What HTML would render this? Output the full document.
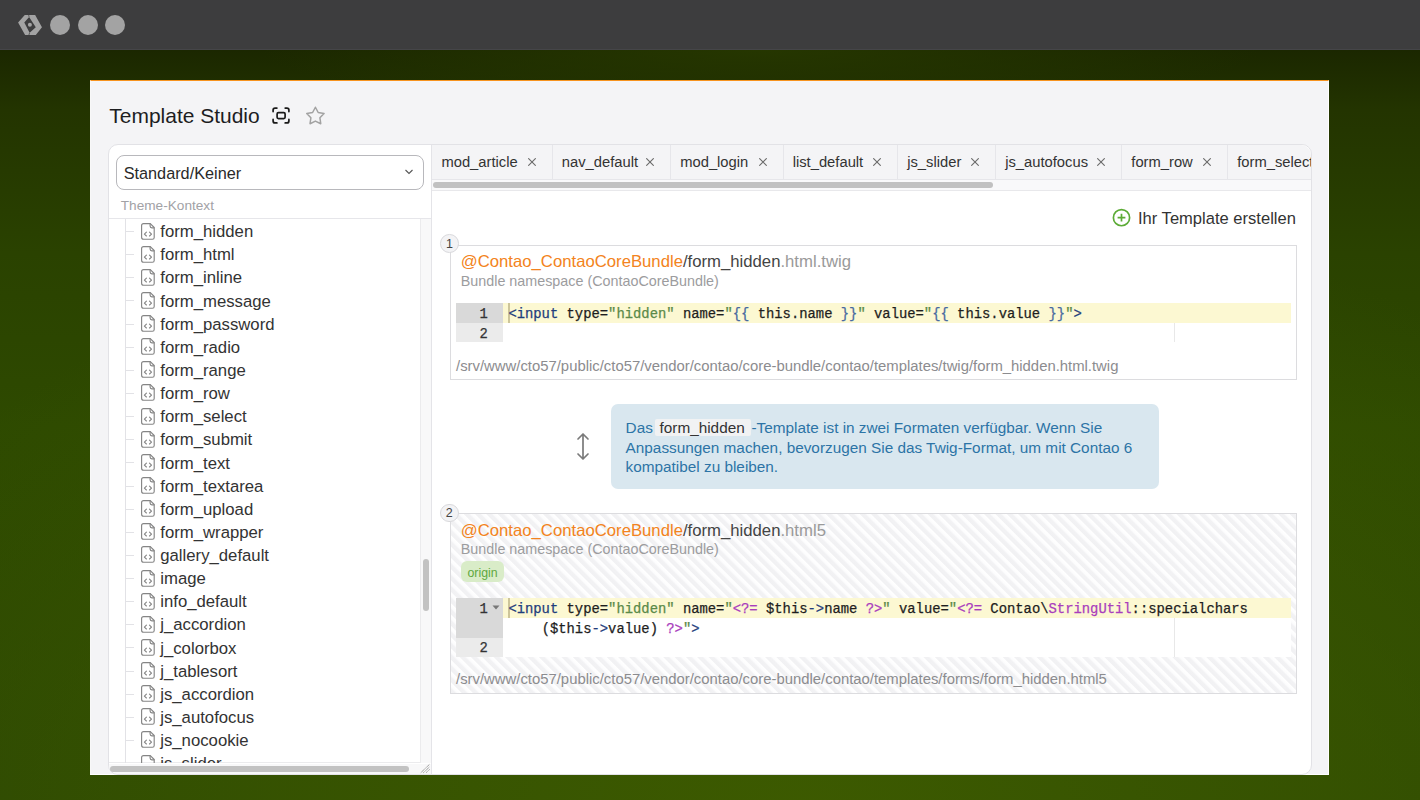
<!DOCTYPE html>
<html><head><meta charset="utf-8">
<style>
*{box-sizing:border-box;margin:0;padding:0}
html,body{width:1420px;height:800px;overflow:hidden;background:#3d3d3d}
body{position:relative;font-family:"Liberation Sans",sans-serif;color:#222}
.abs{position:absolute}
.topbar{left:0;top:0;width:1420px;height:50px;background:#3d3d3e;border-bottom:1px solid #454548}
.dot{width:20px;height:20px;border-radius:50%;background:#a3a3a3;top:15px}
.bg{left:0;top:50px;width:1420px;height:750px;
 background:radial-gradient(ellipse 1050px 620px at 800px 760px, rgba(62,92,0,0.9) 0%, rgba(62,92,0,0.5) 50%, rgba(62,92,0,0) 100%),
 radial-gradient(ellipse 500px 60px at 760px 0px, rgba(40,58,0,0.8) 0%, rgba(40,58,0,0) 100%),
 linear-gradient(180deg,#1b2700 0%,#233400 8%,#2a4200 27%,#2e4a00 50%,#2d4802 100%)}
.panel{left:90px;top:80px;width:1239px;height:695px;background:#f4f4f6;overflow:hidden;border-top:1px solid #f7931e;border-right:1px solid #fff;border-bottom:1px solid #fff;border-left:1px solid #f8f8f8}
.t{position:absolute;white-space:nowrap;line-height:1}
.mono{font-family:"Liberation Mono",monospace;-webkit-text-stroke:0.25px currentColor}
</style></head>
<body>
<div class="abs topbar"></div>
<svg class="abs" style="left:15px;top:12px" width="30" height="26" viewBox="0 0 30 26">
 <path d="M9.75 3.1 L20.15 3.1 L26.97 15.3 L20.8 22.9 L10.1 22.9 L3.1 10.6 Z M14.1 4.9 L9.3 10.4 L14.6 20.8 L20.8 15.3 Z" fill="#a3a3a3" fill-rule="evenodd"/>
 <circle cx="14.9" cy="12.8" r="2" fill="#a3a3a3"/>
 <path d="M13.65 3 L14.1 4.9 M14.6 20.8 L13.9 23" stroke="#3d3d3e" stroke-width="0.7"/>
</svg>
<div class="abs dot" style="left:50px"></div>
<div class="abs dot" style="left:77.5px"></div>
<div class="abs dot" style="left:105px"></div>
<div class="abs bg"></div>
<div class="abs panel"></div>
<div class="t" style="left:109.30px;top:106.35px;font-size:20.97px;color:#1d1d1f;">Template Studio</div>
<svg class="abs" style="left:272px;top:107px" width="18" height="17" viewBox="0 0 18 17" fill="none" stroke="#1a1a1a" stroke-width="1.7" stroke-linecap="round">
<path d="M1.1 4.6V3.1Q1.1 1.1 3.1 1.1H4.9M13.2 1.1H14.9Q16.9 1.1 16.9 3.1V4.6M16.9 12.4V13.9Q16.9 15.9 14.9 15.9H13.2M4.9 15.9H3.1Q1.1 15.9 1.1 13.9V12.4"/>
<rect x="5.1" y="5.6" width="8" height="6" rx="1.3"/></svg>
<svg class="abs" style="left:304px;top:105px" width="23" height="21" viewBox="0 0 23 21" fill="none" stroke="#a2a2a2" stroke-width="1.5" stroke-linejoin="round">
<path d="M11.40 2.25 L14.19 7.51 L20.05 8.54 L15.92 12.82 L16.75 18.71 L11.40 16.10 L6.05 18.71 L6.88 12.82 L2.75 8.54 L8.61 7.51 Z"/></svg>
<div class="abs" style="left:107.50px;top:143.50px;width:1204.00px;height:631.00px;background:#fff;border:1px solid #e2e2e6;border-radius:10px"></div>
<div class="abs" style="left:431.00px;top:144.50px;width:1.00px;height:629.00px;background:#e4e4e8"></div>
<div class="abs" style="left:116.00px;top:155.30px;width:307.80px;height:34.40px;background:#fff;border:1px solid #b8b8bc;border-radius:8px"></div>
<div class="t" style="left:123.70px;top:164.74px;font-size:16.26px;color:#2a2a2a;">Standard/Keiner</div>
<svg class="abs" style="left:402px;top:167px" width="14" height="10" viewBox="0 0 14 10" fill="none" stroke="#555" stroke-width="1.1"><path d="M3.5 3 L7 6.5 L10.5 3"/></svg>
<div class="t" style="left:120.80px;top:199.26px;font-size:13.63px;color:#a2a2a6;">Theme-Kontext</div>
<div class="abs" style="left:108.50px;top:218.00px;width:322.50px;height:1.00px;background:#e6e6ea"></div>
<div class="abs" style="left:420.00px;top:219.00px;width:11.00px;height:543.50px;background:#f8f8f9;border-left:1px solid #ebebed"></div>
<div class="abs" style="left:423.00px;top:558.60px;width:6.00px;height:52.40px;background:#c2c2c2;border-radius:3px"></div>
<div class="abs" style="left:108.50px;top:762.30px;width:312.00px;height:1.00px;background:#ebebed"></div>
<div class="abs" style="left:108.50px;top:763.50px;width:322.50px;height:10.50px;background:#f8f8f9;border-radius:0 0 0 10px"></div>
<div class="abs" style="left:110.00px;top:766.00px;width:298.50px;height:5.60px;background:#c2c2c2;border-radius:3px"></div>
<svg class="abs" style="left:420px;top:762px" width="11" height="12" viewBox="0 0 11 12" stroke="#7a7a7a" stroke-width="0.9" stroke-dasharray="1.1 0.6"><path d="M0.8 10.7 L9.7 2.2 M3.4 10.7 L9.7 4.8 M6.3 10.5 L9.7 7.4"/></svg>
<div class="abs" style="left:125.00px;top:219.00px;width:1.00px;height:543.50px;background:#e2e2e6"></div>
<div class="abs" style="left:108px;top:219px;width:312px;height:543.5px;overflow:hidden">
<div class="abs" style="left:17.5px;top:12.00px;width:8.5px;height:1px;background:#e2e2e6"></div>
<svg class="abs" style="left:32.95px;top:3.50px" width="15" height="18" viewBox="0 0 15 18" fill="none" stroke="#858585" stroke-width="1.15" stroke-linejoin="round" stroke-linecap="round"><path d="M0.6 2.6Q0.6 0.6 2.6 0.6H9.3L13.2 4.5V14.4Q13.2 16.2 11.4 16.2H2.6Q0.6 16.2 0.6 14.2Z"/><path d="M9.1 0.8V3.1Q9.1 4.8 10.8 4.8H13"/><path d="M5.4 9.2L3.4 11.1L5.4 13M8.5 9.2L10.5 11.1L8.5 13"/></svg>
<div class="t" style="left:52.25px;top:5.14px;font-size:16.73px;color:#333">form_hidden</div>
<div class="abs" style="left:17.5px;top:35.14px;width:8.5px;height:1px;background:#e2e2e6"></div>
<svg class="abs" style="left:32.95px;top:26.64px" width="15" height="18" viewBox="0 0 15 18" fill="none" stroke="#858585" stroke-width="1.15" stroke-linejoin="round" stroke-linecap="round"><path d="M0.6 2.6Q0.6 0.6 2.6 0.6H9.3L13.2 4.5V14.4Q13.2 16.2 11.4 16.2H2.6Q0.6 16.2 0.6 14.2Z"/><path d="M9.1 0.8V3.1Q9.1 4.8 10.8 4.8H13"/><path d="M5.4 9.2L3.4 11.1L5.4 13M8.5 9.2L10.5 11.1L8.5 13"/></svg>
<div class="t" style="left:52.25px;top:28.27px;font-size:16.73px;color:#333">form_html</div>
<div class="abs" style="left:17.5px;top:58.27px;width:8.5px;height:1px;background:#e2e2e6"></div>
<svg class="abs" style="left:32.95px;top:49.77px" width="15" height="18" viewBox="0 0 15 18" fill="none" stroke="#858585" stroke-width="1.15" stroke-linejoin="round" stroke-linecap="round"><path d="M0.6 2.6Q0.6 0.6 2.6 0.6H9.3L13.2 4.5V14.4Q13.2 16.2 11.4 16.2H2.6Q0.6 16.2 0.6 14.2Z"/><path d="M9.1 0.8V3.1Q9.1 4.8 10.8 4.8H13"/><path d="M5.4 9.2L3.4 11.1L5.4 13M8.5 9.2L10.5 11.1L8.5 13"/></svg>
<div class="t" style="left:52.25px;top:51.41px;font-size:16.73px;color:#333">form_inline</div>
<div class="abs" style="left:17.5px;top:81.41px;width:8.5px;height:1px;background:#e2e2e6"></div>
<svg class="abs" style="left:32.95px;top:72.91px" width="15" height="18" viewBox="0 0 15 18" fill="none" stroke="#858585" stroke-width="1.15" stroke-linejoin="round" stroke-linecap="round"><path d="M0.6 2.6Q0.6 0.6 2.6 0.6H9.3L13.2 4.5V14.4Q13.2 16.2 11.4 16.2H2.6Q0.6 16.2 0.6 14.2Z"/><path d="M9.1 0.8V3.1Q9.1 4.8 10.8 4.8H13"/><path d="M5.4 9.2L3.4 11.1L5.4 13M8.5 9.2L10.5 11.1L8.5 13"/></svg>
<div class="t" style="left:52.25px;top:74.55px;font-size:16.73px;color:#333">form_message</div>
<div class="abs" style="left:17.5px;top:104.54px;width:8.5px;height:1px;background:#e2e2e6"></div>
<svg class="abs" style="left:32.95px;top:96.04px" width="15" height="18" viewBox="0 0 15 18" fill="none" stroke="#858585" stroke-width="1.15" stroke-linejoin="round" stroke-linecap="round"><path d="M0.6 2.6Q0.6 0.6 2.6 0.6H9.3L13.2 4.5V14.4Q13.2 16.2 11.4 16.2H2.6Q0.6 16.2 0.6 14.2Z"/><path d="M9.1 0.8V3.1Q9.1 4.8 10.8 4.8H13"/><path d="M5.4 9.2L3.4 11.1L5.4 13M8.5 9.2L10.5 11.1L8.5 13"/></svg>
<div class="t" style="left:52.25px;top:97.68px;font-size:16.73px;color:#333">form_password</div>
<div class="abs" style="left:17.5px;top:127.68px;width:8.5px;height:1px;background:#e2e2e6"></div>
<svg class="abs" style="left:32.95px;top:119.18px" width="15" height="18" viewBox="0 0 15 18" fill="none" stroke="#858585" stroke-width="1.15" stroke-linejoin="round" stroke-linecap="round"><path d="M0.6 2.6Q0.6 0.6 2.6 0.6H9.3L13.2 4.5V14.4Q13.2 16.2 11.4 16.2H2.6Q0.6 16.2 0.6 14.2Z"/><path d="M9.1 0.8V3.1Q9.1 4.8 10.8 4.8H13"/><path d="M5.4 9.2L3.4 11.1L5.4 13M8.5 9.2L10.5 11.1L8.5 13"/></svg>
<div class="t" style="left:52.25px;top:120.82px;font-size:16.73px;color:#333">form_radio</div>
<div class="abs" style="left:17.5px;top:150.82px;width:8.5px;height:1px;background:#e2e2e6"></div>
<svg class="abs" style="left:32.95px;top:142.32px" width="15" height="18" viewBox="0 0 15 18" fill="none" stroke="#858585" stroke-width="1.15" stroke-linejoin="round" stroke-linecap="round"><path d="M0.6 2.6Q0.6 0.6 2.6 0.6H9.3L13.2 4.5V14.4Q13.2 16.2 11.4 16.2H2.6Q0.6 16.2 0.6 14.2Z"/><path d="M9.1 0.8V3.1Q9.1 4.8 10.8 4.8H13"/><path d="M5.4 9.2L3.4 11.1L5.4 13M8.5 9.2L10.5 11.1L8.5 13"/></svg>
<div class="t" style="left:52.25px;top:143.95px;font-size:16.73px;color:#333">form_range</div>
<div class="abs" style="left:17.5px;top:173.95px;width:8.5px;height:1px;background:#e2e2e6"></div>
<svg class="abs" style="left:32.95px;top:165.45px" width="15" height="18" viewBox="0 0 15 18" fill="none" stroke="#858585" stroke-width="1.15" stroke-linejoin="round" stroke-linecap="round"><path d="M0.6 2.6Q0.6 0.6 2.6 0.6H9.3L13.2 4.5V14.4Q13.2 16.2 11.4 16.2H2.6Q0.6 16.2 0.6 14.2Z"/><path d="M9.1 0.8V3.1Q9.1 4.8 10.8 4.8H13"/><path d="M5.4 9.2L3.4 11.1L5.4 13M8.5 9.2L10.5 11.1L8.5 13"/></svg>
<div class="t" style="left:52.25px;top:167.09px;font-size:16.73px;color:#333">form_row</div>
<div class="abs" style="left:17.5px;top:197.09px;width:8.5px;height:1px;background:#e2e2e6"></div>
<svg class="abs" style="left:32.95px;top:188.59px" width="15" height="18" viewBox="0 0 15 18" fill="none" stroke="#858585" stroke-width="1.15" stroke-linejoin="round" stroke-linecap="round"><path d="M0.6 2.6Q0.6 0.6 2.6 0.6H9.3L13.2 4.5V14.4Q13.2 16.2 11.4 16.2H2.6Q0.6 16.2 0.6 14.2Z"/><path d="M9.1 0.8V3.1Q9.1 4.8 10.8 4.8H13"/><path d="M5.4 9.2L3.4 11.1L5.4 13M8.5 9.2L10.5 11.1L8.5 13"/></svg>
<div class="t" style="left:52.25px;top:190.23px;font-size:16.73px;color:#333">form_select</div>
<div class="abs" style="left:17.5px;top:220.22px;width:8.5px;height:1px;background:#e2e2e6"></div>
<svg class="abs" style="left:32.95px;top:211.72px" width="15" height="18" viewBox="0 0 15 18" fill="none" stroke="#858585" stroke-width="1.15" stroke-linejoin="round" stroke-linecap="round"><path d="M0.6 2.6Q0.6 0.6 2.6 0.6H9.3L13.2 4.5V14.4Q13.2 16.2 11.4 16.2H2.6Q0.6 16.2 0.6 14.2Z"/><path d="M9.1 0.8V3.1Q9.1 4.8 10.8 4.8H13"/><path d="M5.4 9.2L3.4 11.1L5.4 13M8.5 9.2L10.5 11.1L8.5 13"/></svg>
<div class="t" style="left:52.25px;top:213.36px;font-size:16.73px;color:#333">form_submit</div>
<div class="abs" style="left:17.5px;top:243.36px;width:8.5px;height:1px;background:#e2e2e6"></div>
<svg class="abs" style="left:32.95px;top:234.86px" width="15" height="18" viewBox="0 0 15 18" fill="none" stroke="#858585" stroke-width="1.15" stroke-linejoin="round" stroke-linecap="round"><path d="M0.6 2.6Q0.6 0.6 2.6 0.6H9.3L13.2 4.5V14.4Q13.2 16.2 11.4 16.2H2.6Q0.6 16.2 0.6 14.2Z"/><path d="M9.1 0.8V3.1Q9.1 4.8 10.8 4.8H13"/><path d="M5.4 9.2L3.4 11.1L5.4 13M8.5 9.2L10.5 11.1L8.5 13"/></svg>
<div class="t" style="left:52.25px;top:236.50px;font-size:16.73px;color:#333">form_text</div>
<div class="abs" style="left:17.5px;top:266.50px;width:8.5px;height:1px;background:#e2e2e6"></div>
<svg class="abs" style="left:32.95px;top:258.00px" width="15" height="18" viewBox="0 0 15 18" fill="none" stroke="#858585" stroke-width="1.15" stroke-linejoin="round" stroke-linecap="round"><path d="M0.6 2.6Q0.6 0.6 2.6 0.6H9.3L13.2 4.5V14.4Q13.2 16.2 11.4 16.2H2.6Q0.6 16.2 0.6 14.2Z"/><path d="M9.1 0.8V3.1Q9.1 4.8 10.8 4.8H13"/><path d="M5.4 9.2L3.4 11.1L5.4 13M8.5 9.2L10.5 11.1L8.5 13"/></svg>
<div class="t" style="left:52.25px;top:259.63px;font-size:16.73px;color:#333">form_textarea</div>
<div class="abs" style="left:17.5px;top:289.63px;width:8.5px;height:1px;background:#e2e2e6"></div>
<svg class="abs" style="left:32.95px;top:281.13px" width="15" height="18" viewBox="0 0 15 18" fill="none" stroke="#858585" stroke-width="1.15" stroke-linejoin="round" stroke-linecap="round"><path d="M0.6 2.6Q0.6 0.6 2.6 0.6H9.3L13.2 4.5V14.4Q13.2 16.2 11.4 16.2H2.6Q0.6 16.2 0.6 14.2Z"/><path d="M9.1 0.8V3.1Q9.1 4.8 10.8 4.8H13"/><path d="M5.4 9.2L3.4 11.1L5.4 13M8.5 9.2L10.5 11.1L8.5 13"/></svg>
<div class="t" style="left:52.25px;top:282.77px;font-size:16.73px;color:#333">form_upload</div>
<div class="abs" style="left:17.5px;top:312.77px;width:8.5px;height:1px;background:#e2e2e6"></div>
<svg class="abs" style="left:32.95px;top:304.27px" width="15" height="18" viewBox="0 0 15 18" fill="none" stroke="#858585" stroke-width="1.15" stroke-linejoin="round" stroke-linecap="round"><path d="M0.6 2.6Q0.6 0.6 2.6 0.6H9.3L13.2 4.5V14.4Q13.2 16.2 11.4 16.2H2.6Q0.6 16.2 0.6 14.2Z"/><path d="M9.1 0.8V3.1Q9.1 4.8 10.8 4.8H13"/><path d="M5.4 9.2L3.4 11.1L5.4 13M8.5 9.2L10.5 11.1L8.5 13"/></svg>
<div class="t" style="left:52.25px;top:305.91px;font-size:16.73px;color:#333">form_wrapper</div>
<div class="abs" style="left:17.5px;top:335.90px;width:8.5px;height:1px;background:#e2e2e6"></div>
<svg class="abs" style="left:32.95px;top:327.40px" width="15" height="18" viewBox="0 0 15 18" fill="none" stroke="#858585" stroke-width="1.15" stroke-linejoin="round" stroke-linecap="round"><path d="M0.6 2.6Q0.6 0.6 2.6 0.6H9.3L13.2 4.5V14.4Q13.2 16.2 11.4 16.2H2.6Q0.6 16.2 0.6 14.2Z"/><path d="M9.1 0.8V3.1Q9.1 4.8 10.8 4.8H13"/><path d="M5.4 9.2L3.4 11.1L5.4 13M8.5 9.2L10.5 11.1L8.5 13"/></svg>
<div class="t" style="left:52.25px;top:329.04px;font-size:16.73px;color:#333">gallery_default</div>
<div class="abs" style="left:17.5px;top:359.04px;width:8.5px;height:1px;background:#e2e2e6"></div>
<svg class="abs" style="left:32.95px;top:350.54px" width="15" height="18" viewBox="0 0 15 18" fill="none" stroke="#858585" stroke-width="1.15" stroke-linejoin="round" stroke-linecap="round"><path d="M0.6 2.6Q0.6 0.6 2.6 0.6H9.3L13.2 4.5V14.4Q13.2 16.2 11.4 16.2H2.6Q0.6 16.2 0.6 14.2Z"/><path d="M9.1 0.8V3.1Q9.1 4.8 10.8 4.8H13"/><path d="M5.4 9.2L3.4 11.1L5.4 13M8.5 9.2L10.5 11.1L8.5 13"/></svg>
<div class="t" style="left:52.25px;top:352.18px;font-size:16.73px;color:#333">image</div>
<div class="abs" style="left:17.5px;top:382.18px;width:8.5px;height:1px;background:#e2e2e6"></div>
<svg class="abs" style="left:32.95px;top:373.68px" width="15" height="18" viewBox="0 0 15 18" fill="none" stroke="#858585" stroke-width="1.15" stroke-linejoin="round" stroke-linecap="round"><path d="M0.6 2.6Q0.6 0.6 2.6 0.6H9.3L13.2 4.5V14.4Q13.2 16.2 11.4 16.2H2.6Q0.6 16.2 0.6 14.2Z"/><path d="M9.1 0.8V3.1Q9.1 4.8 10.8 4.8H13"/><path d="M5.4 9.2L3.4 11.1L5.4 13M8.5 9.2L10.5 11.1L8.5 13"/></svg>
<div class="t" style="left:52.25px;top:375.31px;font-size:16.73px;color:#333">info_default</div>
<div class="abs" style="left:17.5px;top:405.31px;width:8.5px;height:1px;background:#e2e2e6"></div>
<svg class="abs" style="left:32.95px;top:396.81px" width="15" height="18" viewBox="0 0 15 18" fill="none" stroke="#858585" stroke-width="1.15" stroke-linejoin="round" stroke-linecap="round"><path d="M0.6 2.6Q0.6 0.6 2.6 0.6H9.3L13.2 4.5V14.4Q13.2 16.2 11.4 16.2H2.6Q0.6 16.2 0.6 14.2Z"/><path d="M9.1 0.8V3.1Q9.1 4.8 10.8 4.8H13"/><path d="M5.4 9.2L3.4 11.1L5.4 13M8.5 9.2L10.5 11.1L8.5 13"/></svg>
<div class="t" style="left:52.25px;top:398.45px;font-size:16.73px;color:#333">j_accordion</div>
<div class="abs" style="left:17.5px;top:428.45px;width:8.5px;height:1px;background:#e2e2e6"></div>
<svg class="abs" style="left:32.95px;top:419.95px" width="15" height="18" viewBox="0 0 15 18" fill="none" stroke="#858585" stroke-width="1.15" stroke-linejoin="round" stroke-linecap="round"><path d="M0.6 2.6Q0.6 0.6 2.6 0.6H9.3L13.2 4.5V14.4Q13.2 16.2 11.4 16.2H2.6Q0.6 16.2 0.6 14.2Z"/><path d="M9.1 0.8V3.1Q9.1 4.8 10.8 4.8H13"/><path d="M5.4 9.2L3.4 11.1L5.4 13M8.5 9.2L10.5 11.1L8.5 13"/></svg>
<div class="t" style="left:52.25px;top:421.59px;font-size:16.73px;color:#333">j_colorbox</div>
<div class="abs" style="left:17.5px;top:451.58px;width:8.5px;height:1px;background:#e2e2e6"></div>
<svg class="abs" style="left:32.95px;top:443.08px" width="15" height="18" viewBox="0 0 15 18" fill="none" stroke="#858585" stroke-width="1.15" stroke-linejoin="round" stroke-linecap="round"><path d="M0.6 2.6Q0.6 0.6 2.6 0.6H9.3L13.2 4.5V14.4Q13.2 16.2 11.4 16.2H2.6Q0.6 16.2 0.6 14.2Z"/><path d="M9.1 0.8V3.1Q9.1 4.8 10.8 4.8H13"/><path d="M5.4 9.2L3.4 11.1L5.4 13M8.5 9.2L10.5 11.1L8.5 13"/></svg>
<div class="t" style="left:52.25px;top:444.72px;font-size:16.73px;color:#333">j_tablesort</div>
<div class="abs" style="left:17.5px;top:474.72px;width:8.5px;height:1px;background:#e2e2e6"></div>
<svg class="abs" style="left:32.95px;top:466.22px" width="15" height="18" viewBox="0 0 15 18" fill="none" stroke="#858585" stroke-width="1.15" stroke-linejoin="round" stroke-linecap="round"><path d="M0.6 2.6Q0.6 0.6 2.6 0.6H9.3L13.2 4.5V14.4Q13.2 16.2 11.4 16.2H2.6Q0.6 16.2 0.6 14.2Z"/><path d="M9.1 0.8V3.1Q9.1 4.8 10.8 4.8H13"/><path d="M5.4 9.2L3.4 11.1L5.4 13M8.5 9.2L10.5 11.1L8.5 13"/></svg>
<div class="t" style="left:52.25px;top:467.86px;font-size:16.73px;color:#333">js_accordion</div>
<div class="abs" style="left:17.5px;top:497.86px;width:8.5px;height:1px;background:#e2e2e6"></div>
<svg class="abs" style="left:32.95px;top:489.36px" width="15" height="18" viewBox="0 0 15 18" fill="none" stroke="#858585" stroke-width="1.15" stroke-linejoin="round" stroke-linecap="round"><path d="M0.6 2.6Q0.6 0.6 2.6 0.6H9.3L13.2 4.5V14.4Q13.2 16.2 11.4 16.2H2.6Q0.6 16.2 0.6 14.2Z"/><path d="M9.1 0.8V3.1Q9.1 4.8 10.8 4.8H13"/><path d="M5.4 9.2L3.4 11.1L5.4 13M8.5 9.2L10.5 11.1L8.5 13"/></svg>
<div class="t" style="left:52.25px;top:490.99px;font-size:16.73px;color:#333">js_autofocus</div>
<div class="abs" style="left:17.5px;top:520.99px;width:8.5px;height:1px;background:#e2e2e6"></div>
<svg class="abs" style="left:32.95px;top:512.49px" width="15" height="18" viewBox="0 0 15 18" fill="none" stroke="#858585" stroke-width="1.15" stroke-linejoin="round" stroke-linecap="round"><path d="M0.6 2.6Q0.6 0.6 2.6 0.6H9.3L13.2 4.5V14.4Q13.2 16.2 11.4 16.2H2.6Q0.6 16.2 0.6 14.2Z"/><path d="M9.1 0.8V3.1Q9.1 4.8 10.8 4.8H13"/><path d="M5.4 9.2L3.4 11.1L5.4 13M8.5 9.2L10.5 11.1L8.5 13"/></svg>
<div class="t" style="left:52.25px;top:514.13px;font-size:16.73px;color:#333">js_nocookie</div>
<div class="abs" style="left:17.5px;top:544.13px;width:8.5px;height:1px;background:#e2e2e6"></div>
<svg class="abs" style="left:32.95px;top:535.63px" width="15" height="18" viewBox="0 0 15 18" fill="none" stroke="#858585" stroke-width="1.15" stroke-linejoin="round" stroke-linecap="round"><path d="M0.6 2.6Q0.6 0.6 2.6 0.6H9.3L13.2 4.5V14.4Q13.2 16.2 11.4 16.2H2.6Q0.6 16.2 0.6 14.2Z"/><path d="M9.1 0.8V3.1Q9.1 4.8 10.8 4.8H13"/><path d="M5.4 9.2L3.4 11.1L5.4 13M8.5 9.2L10.5 11.1L8.5 13"/></svg>
<div class="t" style="left:52.25px;top:537.27px;font-size:16.73px;color:#333">js_slider</div>
</div>
<div class="abs" style="left:432.00px;top:144.50px;width:878.50px;height:35.00px;background:#f4f4f6;border-radius:0 10px 0 0"></div>
<div class="abs" style="left:432.00px;top:179.00px;width:878.50px;height:1.00px;background:#e6e6ea"></div>
<div class="abs" style="left:432.00px;top:180.00px;width:878.50px;height:10.00px;background:#f9f9fa"></div>
<div class="abs" style="left:432.00px;top:190.00px;width:878.50px;height:1.00px;background:#e8e8eb"></div>
<div class="abs" style="left:433.00px;top:182.00px;width:560.00px;height:6.00px;background:#c1c1c1;border-radius:3px"></div>
<div class="abs" style="left:432px;top:144.5px;width:878.5px;height:35px;overflow:hidden;border-radius:0 10px 0 0">
<div class="t" style="left:9.40px;top:10.41px;font-size:14.75px;color:#333">mod_article</div>
<svg class="abs" style="left:95.80px;top:13.20px" width="8" height="8" viewBox="0 0 8 8" stroke="#6a6a6a" stroke-width="1.1"><path d="M0.3 0.3L7.7 7.7M7.7 0.3L0.3 7.7"/></svg>
<div class="abs" style="left:119.80px;top:0;width:1px;height:35px;background:#e6e6ea"></div>
<div class="t" style="left:129.80px;top:10.41px;font-size:14.75px;color:#333">nav_default</div>
<svg class="abs" style="left:214.20px;top:13.20px" width="8" height="8" viewBox="0 0 8 8" stroke="#6a6a6a" stroke-width="1.1"><path d="M0.3 0.3L7.7 7.7M7.7 0.3L0.3 7.7"/></svg>
<div class="abs" style="left:238.20px;top:0;width:1px;height:35px;background:#e6e6ea"></div>
<div class="t" style="left:248.20px;top:10.41px;font-size:14.75px;color:#333">mod_login</div>
<svg class="abs" style="left:326.70px;top:13.20px" width="8" height="8" viewBox="0 0 8 8" stroke="#6a6a6a" stroke-width="1.1"><path d="M0.3 0.3L7.7 7.7M7.7 0.3L0.3 7.7"/></svg>
<div class="abs" style="left:350.70px;top:0;width:1px;height:35px;background:#e6e6ea"></div>
<div class="t" style="left:360.70px;top:10.41px;font-size:14.75px;color:#333">list_default</div>
<svg class="abs" style="left:441.20px;top:13.20px" width="8" height="8" viewBox="0 0 8 8" stroke="#6a6a6a" stroke-width="1.1"><path d="M0.3 0.3L7.7 7.7M7.7 0.3L0.3 7.7"/></svg>
<div class="abs" style="left:465.20px;top:0;width:1px;height:35px;background:#e6e6ea"></div>
<div class="t" style="left:475.20px;top:10.41px;font-size:14.75px;color:#333">js_slider</div>
<svg class="abs" style="left:539.20px;top:13.20px" width="8" height="8" viewBox="0 0 8 8" stroke="#6a6a6a" stroke-width="1.1"><path d="M0.3 0.3L7.7 7.7M7.7 0.3L0.3 7.7"/></svg>
<div class="abs" style="left:563.20px;top:0;width:1px;height:35px;background:#e6e6ea"></div>
<div class="t" style="left:573.20px;top:10.41px;font-size:14.75px;color:#333">js_autofocus</div>
<svg class="abs" style="left:665.30px;top:13.20px" width="8" height="8" viewBox="0 0 8 8" stroke="#6a6a6a" stroke-width="1.1"><path d="M0.3 0.3L7.7 7.7M7.7 0.3L0.3 7.7"/></svg>
<div class="abs" style="left:689.30px;top:0;width:1px;height:35px;background:#e6e6ea"></div>
<div class="t" style="left:699.30px;top:10.41px;font-size:14.75px;color:#333">form_row</div>
<svg class="abs" style="left:771.20px;top:13.20px" width="8" height="8" viewBox="0 0 8 8" stroke="#6a6a6a" stroke-width="1.1"><path d="M0.3 0.3L7.7 7.7M7.7 0.3L0.3 7.7"/></svg>
<div class="abs" style="left:795.20px;top:0;width:1px;height:35px;background:#e6e6ea"></div>
<div class="t" style="left:805.20px;top:10.41px;font-size:14.75px;color:#333">form_select</div>
</div>
<svg class="abs" style="left:1111px;top:208px" width="21" height="21" viewBox="0 0 21 21" fill="none" stroke="#5cab36" stroke-width="1.7"><circle cx="10.5" cy="9.65" r="8.1"/><path d="M10.5 5.75V13.55M6.6 9.65H14.4"/></svg>
<div class="t" style="left:1138.00px;top:211.18px;font-size:16.56px;color:#333;">Ihr Template erstellen</div>
<div class="abs" style="left:449.80px;top:244.50px;width:847.20px;height:135.50px;background:#fff;border:1px solid #dcdcdf"></div>
<div class="abs" style="left:440.20px;top:234.20px;width:18.60px;height:18.60px;background:#f3f3f5;border:1px solid #d9d9dc;border-radius:50%;z-index:2"></div>
<div class="t" style="left:440.20px;top:237.50px;width:18.6px;text-align:center;font-size:12.5px;line-height:12px;color:#444;z-index:3">1</div>
<div class="t" style="left:460.75px;top:253.75px;font-size:16.72px;color:#222;"><span style="color:#f38320">@Contao_ContaoCoreBundle</span><span style="color:#444">/form_hidden</span><span style="color:#9a9a9a">.html.twig</span></div>
<div class="t" style="left:460.75px;top:273.86px;font-size:14.34px;color:#9c9c9e;">Bundle namespace (ContaoCoreBundle)</div>
<div class="abs" style="left:456.00px;top:303.20px;width:47.00px;height:19.65px;background:#d9d9d9"></div>
<div class="abs" style="left:456.00px;top:322.85px;width:47.00px;height:19.65px;background:#ebebeb"></div>
<div class="abs" style="left:503.00px;top:303.20px;width:788.00px;height:19.65px;background:#fcf8d2"></div>
<div class="abs" style="left:507.50px;top:303.20px;width:2.00px;height:19.65px;background:#cdc59a"></div>
<div class="abs" style="left:1173.80px;top:322.85px;width:1.00px;height:19.65px;background:#e8e8e8"></div>
<div class="t mono" style="left:508.40px;top:308.14px;font-size:13.85px;color:#1e1e1e"><span style="color:#1f3d7c">&lt;input</span> type=<span style="color:#5a8a48">"hidden"</span> name=<span style="color:#5a8a48">"</span><span style="color:#47699f">{{</span> this.name <span style="color:#47699f">}}</span><span style="color:#5a8a48">"</span> value=<span style="color:#5a8a48">"</span><span style="color:#47699f">{{</span> this.value <span style="color:#47699f">}}</span><span style="color:#5a8a48">"</span><span style="color:#1f3d7c">&gt;</span></div>
<div class="t mono" style="left:456px;width:31.75px;text-align:right;top:308.14px;font-size:13.85px;color:#333">1</div>
<div class="t mono" style="left:456px;width:31.75px;text-align:right;top:327.79px;font-size:13.85px;color:#333">2</div>
<div class="t" style="left:456.00px;top:359.21px;font-size:14.87px;color:#8c8c8f;">/srv/www/cto57/public/cto57/vendor/contao/core-bundle/contao/templates/twig/form_hidden.html.twig</div>
<svg class="abs" style="left:575px;top:432px" width="16" height="29" viewBox="0 0 16 29" fill="none" stroke="#7a7a7a" stroke-width="1.7" stroke-linecap="round" stroke-linejoin="round"><path d="M8 2.5V26.5M3 7L8 2L13 7M3 22L8 27L13 22"/></svg>
<div class="abs" style="left:611.00px;top:404.30px;width:548.00px;height:84.30px;background:#d9e7ef;border-radius:7px"></div>
<div class="abs" style="left:655.10px;top:419.20px;width:95.90px;height:16.80px;background:#f1f2f3;border-radius:2px"></div>
<div class="t" style="left:625.60px;top:420.22px;font-size:15.33px;color:#2c74a6;">Das</div>
<div class="t" style="left:659.50px;top:420.22px;font-size:15.33px;color:#333;">form_hidden</div>
<div class="t" style="left:751.50px;top:420.22px;font-size:15.33px;color:#2c74a6;">-Template ist in zwei Formaten verfügbar. Wenn Sie</div>
<div class="t" style="left:625.60px;top:439.72px;font-size:15.33px;color:#2c74a6;">Anpassungen machen, bevorzugen Sie das Twig-Format, um mit Contao 6</div>
<div class="t" style="left:625.60px;top:459.12px;font-size:15.33px;color:#2c74a6;">kompatibel zu bleiben.</div>
<div class="abs" style="left:449.80px;top:513.00px;width:847.20px;height:180.80px;border:1px solid #dcdcdf;background:repeating-linear-gradient(45deg,#f1f1f3 0px,#f2f2f4 3px,#fcfcfd 4.5px,#fff 7px,#f1f1f3 8px)"></div>
<div class="abs" style="left:439.95px;top:503.70px;width:18.60px;height:18.60px;background:#f3f3f5;border:1px solid #d9d9dc;border-radius:50%;z-index:2"></div>
<div class="t" style="left:439.95px;top:507.00px;width:18.6px;text-align:center;font-size:12.5px;line-height:12px;color:#444;z-index:3">2</div>
<div class="t" style="left:460.75px;top:523.30px;font-size:16.72px;color:#222;"><span style="color:#f38320">@Contao_ContaoCoreBundle</span><span style="color:#444">/form_hidden</span><span style="color:#9a9a9a">.html5</span></div>
<div class="t" style="left:460.75px;top:542.06px;font-size:14.34px;color:#9c9c9e;">Bundle namespace (ContaoCoreBundle)</div>
<div class="abs" style="left:461.00px;top:561.25px;width:43.25px;height:20.50px;background:#d9ecc8;border-radius:6px"></div>
<div class="t" style="left:467.50px;top:566.59px;font-size:12.3px;color:#5ea83e;">origin</div>
<div class="abs" style="left:456.00px;top:598.25px;width:47.00px;height:39.30px;background:#d9d9d9"></div>
<div class="abs" style="left:456.00px;top:637.55px;width:47.00px;height:19.65px;background:#ebebeb"></div>
<div class="abs" style="left:503.00px;top:598.25px;width:788.00px;height:58.95px;background:#fff"></div>
<div class="abs" style="left:503.00px;top:598.25px;width:788.00px;height:19.65px;background:#fcf8d2"></div>
<div class="abs" style="left:507.50px;top:598.25px;width:2.00px;height:19.65px;background:#cdc59a"></div>
<div class="abs" style="left:1173.80px;top:617.90px;width:1.00px;height:39.30px;background:#e8e8e8"></div>
<svg class="abs" style="left:491.5px;top:605.25px" width="8" height="5" viewBox="0 0 8 5"><path d="M0.5 0.5H7.5L4 4.5Z" fill="#777"/></svg>
<div class="t mono" style="left:456px;width:31.75px;text-align:right;top:603.19px;font-size:13.85px;color:#333">1</div>
<div class="t mono" style="left:456px;width:31.75px;text-align:right;top:642.49px;font-size:13.85px;color:#333">2</div>
<div class="t mono" style="left:508.40px;top:603.19px;font-size:13.85px;color:#1e1e1e"><span style="color:#1f3d7c">&lt;input</span> type=<span style="color:#5a8a48">"hidden"</span> name=<span style="color:#5a8a48">"</span><span style="color:#a93dbd">&lt;?=</span> $this<span style="color:#1f3d7c">-&gt;</span>name <span style="color:#a93dbd">?&gt;</span><span style="color:#5a8a48">"</span> value=<span style="color:#5a8a48">"</span><span style="color:#a93dbd">&lt;?=</span> Contao\<span style="color:#a93dbd">StringUtil</span>::specialchars</div>
<div class="t mono" style="left:541.64px;top:622.84px;font-size:13.85px;color:#1e1e1e">($this<span style="color:#1f3d7c">-&gt;</span>value) <span style="color:#a93dbd">?&gt;</span><span style="color:#5a8a48">"</span><span style="color:#1f3d7c">&gt;</span></div>
<div class="t" style="left:456.00px;top:672.36px;font-size:14.87px;color:#8c8c8f;">/srv/www/cto57/public/cto57/vendor/contao/core-bundle/contao/templates/forms/form_hidden.html5</div>
</body></html>
